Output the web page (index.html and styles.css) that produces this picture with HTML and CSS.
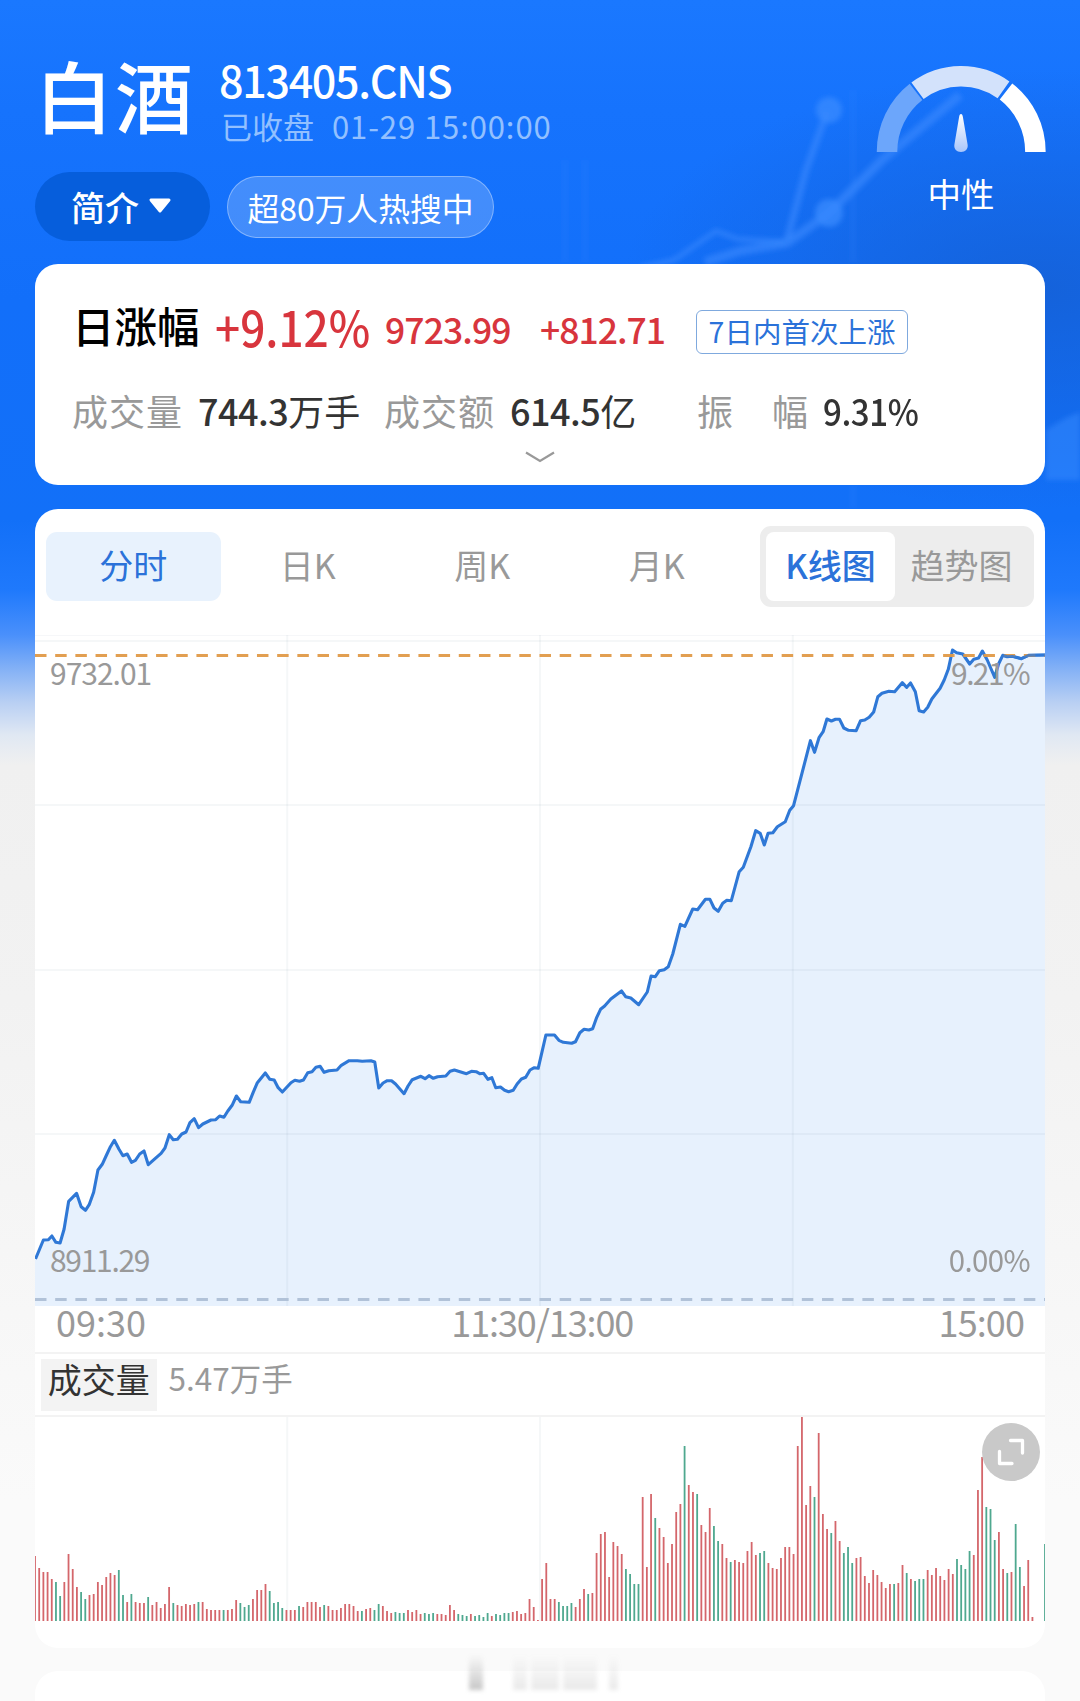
FILE: index.html
```html
<!DOCTYPE html>
<html lang="zh-CN">

<head>
    <meta charset="UTF-8">
    <meta name="viewport" content="width=device-width, initial-scale=1.0">
    <title>白酒 813405.CNS</title>
    <link rel="stylesheet" href="styles.css">
</head>

<body>
    <div class="page">
        <svg class="hero-art" width="1080" height="560" viewBox="0 0 1080 560">
            <defs>
                <filter id="soft" x="-10%" y="-10%" width="120%" height="120%"><feGaussianBlur stdDeviation="2.500"/></filter>
                <radialGradient id="shade">
                    <stop offset="0" stop-color="#155fd3" stop-opacity=".8"/>
                    <stop offset="1" stop-color="#155fd3" stop-opacity="0"/>
                </radialGradient>
            </defs>
            <ellipse cx="1040" cy="290" rx="420" ry="220" fill="url(#shade)"/>
            <g filter="url(#soft)" stroke="#3a8bff" fill="none" stroke-opacity=".6" stroke-linejoin="round">
                <path d="M640 268L674 260L716 231L738 239L785 242" stroke-width="5"/>
                <path d="M705 262L740 251L787 243L829 213L882 160L960 95" stroke-width="9"/>
                <path d="M787 240L806 170L827 112" stroke-width="7"/>
                <circle cx="829" cy="110" r="13" fill="#3a8bff" fill-opacity=".7" stroke="none"/>
                <circle cx="829" cy="213" r="14" fill="#3a8bff" fill-opacity=".7" stroke="none"/>
                <path d="M853 90V262M853 486V508M565 160V262M585 160V262" stroke-width="3" stroke-opacity=".25"/>
                <path d="M1046 430L1066 418L1080 412V480H1046Z" fill="#3a8bff" fill-opacity=".5" stroke="none"/>
            </g>
        </svg>

        <div class="header">
            <div class="header-top">
                <h1>白酒</h1>
                <div class="meta">
                    <div class="code">813405.CNS</div>
                    <div class="status"><span>已收盘</span><span class="date">01-29 15:00:00</span></div>
                </div>
            </div>
            <div class="pills">
                <div class="pill pill-dark">简介
                    <svg width="24" height="16" viewBox="0 0 24 16"><path d="M3 2H21L12 13Z" fill="#fff" stroke="#fff" stroke-width="3" stroke-linejoin="round"/></svg>
                </div>
                <div class="pill pill-light">超80万人热搜中</div>
            </div>
            <div class="gauge">
                <svg width="172" height="90" viewBox="0 0 172 90">
                    <defs>
                        <linearGradient id="needle" x1="0" y1="0" x2="0" y2="1">
                            <stop offset="0" stop-color="#fff"/>
                            <stop offset="1" stop-color="#a9c6fb"/>
                        </linearGradient>
                    </defs>
                    <g fill="none" stroke-width="20.5">
                        <path d="M12 87A74.2 75.5 0 0 1 41 26.9" stroke="#6ca6fb"/>
                        <path d="M42.5 25.8A74.2 75.5 0 0 1 128.5 24.8" stroke="#d3e2fb"/>
                        <path d="M131 26.5A74.2 75.5 0 0 1 160.4 87" stroke="#fff"/>
                    </g>
                    <path d="M86 49C87 49 87.600 50 87.900 52L92.600 79.500C93.400 84 90.300 87 86 87S78.600 84 79.400 79.500L84.100 52C84.400 50 85 49 86 49Z" fill="url(#needle)"/>
                </svg>
                <div class="gauge-label">中性</div>
            </div>
        </div>

        <div class="card summary">
            <div class="change">
                <span class="change-label">日涨幅</span>
                <span class="change-pct">+9.12%</span>
                <span class="change-price">9723.99</span>
                <span class="change-diff">+812.71</span>
                <span class="tag">7日内首次上涨</span>
            </div>
            <div class="stats">
                <div class="stat"><span class="stat-name">成交量</span><span class="stat-value"><b>744.3</b>万手</span></div>
                <div class="stat"><span class="stat-name">成交额</span><span class="stat-value"><b>614.5</b>亿</span></div>
                <div class="stat"><span class="stat-name spread"><i>振</i><i>幅</i></span><span class="stat-value rate"><b>9.31%</b></span></div>
            </div>
            <svg class="chevron" width="32" height="14" viewBox="0 0 32 14"><path d="M2 2.500L16 11L30 2.500" fill="none" stroke="#999" stroke-width="2.200"/></svg>
        </div>

        <div class="card chart-card">
            <div class="tabs">
                <div class="tab active">分时</div>
                <div class="tab">日K</div>
                <div class="tab">周K</div>
                <div class="tab">月K</div>
                <div class="toggle">
                    <div class="toggle-item on">K线图</div>
                    <div class="toggle-item">趋势图</div>
                </div>
            </div>

            <div class="price-chart">
                <svg id="priceChart" width="1010" height="671" viewBox="0 0 1011 671" preserveAspectRatio="none"></svg>
                <span class="label top-left">9732.01</span>
                <span class="label top-right">9.21%</span>
                <span class="label bottom-left">8911.29</span>
                <span class="label bottom-right">0.00%</span>
            </div>
            <div class="time-axis">
                <span>09:30</span>
                <span class="midday">11:30/13:00</span>
                <span class="close">15:00</span>
            </div>

            <div class="volume-head">
                <span class="volume-name">成交量</span>
                <span class="volume-value">5.47万手</span>
            </div>
            <div class="volume-chart">
                <svg id="volumeChart" width="1010" height="204" viewBox="0 0 1011 204" preserveAspectRatio="none"></svg>
                <div class="expand">
                    <svg width="30" height="30" viewBox="0 0 30 30"><path d="M14.500 3.500H26.500V16M3.500 14.500V26.500H16" fill="none" stroke="#fff" stroke-width="3.300" stroke-linecap="round" stroke-linejoin="round"/></svg>
                </div>
            </div>
        </div>

        <div class="card next-card">
            <div class="ghost">
                <i class="g1"></i><i class="g2"></i><i class="g3"></i><i class="g4"></i><i class="g5"></i>
            </div>
        </div>
    </div>

    <script src="chart.js"></script>
</body>

</html>
```

FILE: styles.css
```css
:root {
    --blue: #2b72d9;
    --red: #d8353d;
    --grey: #999;
    --line: #f3f3f3;
}

* {
    box-sizing: border-box;
}

body {
    margin: 0;
    font-family: "Noto Sans CJK SC", sans-serif;
    background: #fafafa;
}

.page {
    position: relative;
    height: 1701px;
    padding: 54px 35px 0;
    overflow: hidden;
    background: linear-gradient(#1a78ff 0, #1673fd 110px, #126ffa 300px, #1270f8 520px, #1f79fc 590px, #4a90fb 635px, #82b0f6 668px, #b8cff3 702px, #e0e8f3 735px, #f0f0f0 765px, #f2f2f2 1000px, #fafafa 1500px);
}

.hero-art {
    position: absolute;
    left: 0;
    top: 0;
}

/* header */
.header {
    position: relative;
    height: 209.5px;
    color: #fff;
}

.header-top {
    display: flex;
    height: 90px;
}

h1 {
    margin: 0;
    width: 184px;
    font-size: 78px;
    font-weight: 500;
    line-height: 81px;
    letter-spacing: 2px;
}

.code {
    padding-top: 2px;
    font-size: 43px;
    line-height: 46px;
    font-weight: 500;
    letter-spacing: -1.3px;
}

.status {
    display: flex;
    gap: 18px;
    margin-top: 6px;
    padding-left: 2px;
    font-size: 31px;
    line-height: 36px;
    color: #92c0ff;
}

.date {
    letter-spacing: 0.9px;
}

.pills {
    display: flex;
    align-items: center;
    gap: 17px;
    margin-top: 28px;
}

.pill {
    display: flex;
    align-items: center;
    justify-content: center;
}

.pill-dark {
    width: 175px;
    height: 69px;
    gap: 9px;
    padding-right: 2px;
    border-radius: 35px;
    background: #065edc;
    font-size: 34px;
    font-weight: 500;
    line-height: 62px;
}

.pill-dark svg {
    position: relative;
    top: -1px;
}

.pill-light {
    width: 267px;
    height: 62px;
    border: 1.5px solid rgba(255, 255, 255, 0.35);
    border-radius: 31px;
    background: rgba(255, 255, 255, 0.2);
    font-size: 31.8px;
    line-height: 54px;
    white-space: nowrap;
}

.gauge {
    position: absolute;
    top: 11px;
    right: -2px;
    display: flex;
    flex-direction: column;
    align-items: center;
}

.gauge-label {
    margin-top: 16px;
    font-size: 33.5px;
    line-height: 44px;
}

/* summary card */
.card {
    position: relative;
    border-radius: 23px;
    background: #fff;
}

.summary {
    height: 221.5px;
    padding: 33px 37px 0 37px;
}

.change {
    display: flex;
    align-items: center;
    height: 60px;
    color: var(--red);
    font-weight: 500;
    white-space: nowrap;
}

.change-label {
    width: 143px;
    margin-top: -4px;
    color: #000;
    font-size: 42.5px;
}

.change-pct {
    width: 170px;
    margin-top: -2px;
    font-size: 48.5px;
    transform: scaleX(0.91);
    transform-origin: left;
}

.change-price {
    width: 155px;
    margin-top: 3px;
    font-size: 35.5px;
    letter-spacing: -0.9px;
}

.change-diff {
    width: 156px;
    margin-top: 3px;
    font-size: 35.5px;
    letter-spacing: -1px;
}

.tag {
    width: 212px;
    height: 44px;
    margin-top: 11px;
    border: 1.5px solid #7fa9de;
    border-radius: 6px;
    color: var(--blue);
    font-size: 28.5px;
    font-weight: 400;
    line-height: 40px;
    text-align: center;
}

.stats {
    display: grid;
    grid-template-columns: 312px 313px 1fr;
    margin-top: 28px;
    font-size: 36px;
    line-height: 50px;
    white-space: nowrap;
}

.stat {
    display: flex;
}

.stat-name {
    width: 126px;
    color: var(--grey);
    letter-spacing: 1px;
}

.spread {
    display: flex;
    justify-content: space-between;
    width: 112px;
    margin-right: 14px;
}

.stat i {
    font-style: normal;
}

.stat-value {
    color: #333;
}

.stat-value b {
    font-weight: 500;
    letter-spacing: -0.5px;
}

.rate {
    transform: scaleX(0.92);
    transform-origin: left;
}

.chevron {
    position: absolute;
    left: 489px;
    bottom: 21px;
}

/* chart card */
.chart-card {
    height: 1138.5px;
    margin-top: 24px;
}

.tabs {
    display: flex;
    align-items: center;
    height: 115px;
    margin-bottom: 11px;
    padding: 0 11px;
    color: var(--grey);
    font-size: 34px;
}

.tab {
    width: 174.5px;
    height: 69px;
    border-radius: 11px;
    line-height: 65px;
    text-align: center;
}

.tab.active {
    background: #e8f2fd;
    color: var(--blue);
}

.toggle {
    display: flex;
    width: 274px;
    height: 81px;
    margin-left: auto;
    padding: 6px;
    border-radius: 11px;
    background: #ededed;
}

.toggle-item {
    width: 133px;
    height: 69px;
    border-radius: 8px;
    line-height: 65px;
    text-align: center;
}

.toggle-item.on {
    width: 129px;
    background: #fff;
    color: var(--blue);
    font-weight: 500;
}

.price-chart {
    position: relative;
    height: 671px;
}

.price-chart svg,
.volume-chart svg {
    display: block;
}

.label {
    position: absolute;
    color: var(--grey);
    font-size: 30px;
    line-height: 30px;
    letter-spacing: -1px;
}

.top-left {
    left: 15px;
    top: 22px;
}

.top-right {
    right: 16px;
    top: 22px;
    letter-spacing: -1.6px;
}

.bottom-left {
    left: 15px;
    top: 609px;
    letter-spacing: -1.3px;
}

.bottom-right {
    right: 15px;
    top: 609px;
    letter-spacing: -0.6px;
    transform: scaleX(0.98);
    transform-origin: right;
}

.time-axis {
    display: flex;
    justify-content: space-between;
    height: 48px;
    padding: 0 21px;
    border-bottom: 2px solid var(--line);
    color: var(--grey);
    font-size: 36px;
    line-height: 31px;
}

.midday {
    letter-spacing: -1.1px;
}

.close {
    letter-spacing: -0.9px;
}

.volume-head {
    display: flex;
    height: 63px;
    padding: 5px 6px;
    border-bottom: 2px solid var(--line);
}

.volume-name {
    width: 115.5px;
    height: 52px;
    background: #f3f3f3;
    color: #333;
    font-size: 34px;
    line-height: 40px;
    text-align: center;
}

.volume-value {
    margin-left: 12px;
    color: var(--grey);
    font-size: 31.5px;
    line-height: 37px;
}

.volume-chart {
    position: relative;
}

.expand {
    position: absolute;
    top: 6px;
    right: 5px;
    display: flex;
    align-items: center;
    justify-content: center;
    width: 58px;
    height: 58px;
    border-radius: 50%;
    background: #c9c9c9;
}

/* next card, cut off by the bottom of the screen */
.next-card {
    height: 60px;
    margin-top: 23px;
}

.ghost {
    position: absolute;
    left: 425px;
    top: -16px;
    display: flex;
    gap: 4px;
    height: 35px;
    filter: blur(2px);
}

.ghost i {
    background: linear-gradient(rgba(120, 120, 120, 0), rgba(120, 120, 120, 0.16));
}

.ghost .g1 {
    width: 14px;
    margin: 0 26px 0 9px;
    background: linear-gradient(rgba(120, 120, 120, 0), rgba(120, 120, 120, 0.42));
}

.ghost .g2 {
    width: 14px;
}

.ghost .g3 {
    width: 28px;
}

.ghost .g4 {
    width: 34px;
}

.ghost .g5 {
    width: 9px;
    margin-left: 8px;
}
```

FILE: chart.js
```js
const NS = 'http://www.w3.org/2000/svg';
const WIDTH = 1011;

const price = [
    [0.5, 624], [8.4, 605], [13.4, 604.7], [16.9, 601], [20.9, 607.3], [25.1, 608], [29.1, 594.3], [33.7, 566.3],
    [41.6, 558.3], [46.2, 571.7], [50.5, 575.3], [54.4, 569.3], [58.7, 557.3], [63, 535], [67.3, 529.3], [71.6, 520],
    [75.5, 511.7], [79.4, 505.3], [84.1, 514.3], [88, 520.7], [92.3, 519], [96.6, 527.3], [100.5, 525.3], [104.8, 519],
    [109.1, 516], [113.4, 529.7], [121.6, 522.3], [126.2, 518.3], [130.1, 513], [134.4, 499.7], [138.4, 504.7],
    [142.6, 504.3], [146.9, 499], [151.2, 497], [155.1, 487.7], [159.4, 483.7], [163.7, 492.7], [168, 489],
    [176.2, 485], [180.9, 484.7], [184.8, 481], [189.1, 482.3], [193, 476], [197.3, 470.3], [201.6, 461],
    [205.9, 466.7], [214.4, 467.3], [218.4, 457.3], [222.6, 447.7], [230.5, 438], [235.1, 444.3], [239.4, 445],
    [243.4, 452.7], [247.6, 457], [256.2, 447.7], [260.1, 445.3], [264.8, 446.3], [268.7, 445], [273, 437.7],
    [277.3, 436.7], [281.2, 432.3], [285.5, 431.3], [289.4, 437.3], [294.1, 435.7], [302.3, 435], [306.6, 430.3],
    [314.4, 425.7], [322.6, 425.7], [327.6, 426.3], [336.2, 425.7], [340.1, 427], [344.1, 453], [348.4, 448],
    [352.6, 445.7], [356.9, 445.7], [360.9, 449], [369.4, 458.7], [373.4, 451], [377.6, 444.7], [386.2, 441.3],
    [390.5, 443.7], [394.4, 440.7], [398.7, 443.3], [403, 441.7], [411.2, 441], [415.5, 436.3], [419.8, 435],
    [431.9, 438.7], [436.9, 436.3], [441.6, 436.7], [445.1, 438.7], [449.1, 438.3], [453.4, 444.3], [457.3, 442.7],
    [461.2, 452.7], [465.9, 452], [470.1, 455.3], [474.1, 456.7], [478.7, 455.3], [482.6, 449], [486.9, 444],
    [491.2, 442.3], [495.5, 435], [499.8, 432.7], [503.7, 433.3], [511.4, 400], [520, 400], [524.4, 405.3],
    [528.9, 407.3], [537.2, 408.3], [541, 406.7], [545.4, 397.7], [549.6, 394.3], [554.4, 395], [558.2, 393.7],
    [562.3, 382.3], [566.1, 374.3], [570.2, 371], [576.4, 364], [587.1, 356], [591.2, 361.7], [596.4, 363],
    [604.3, 369.7], [612.9, 357], [616.7, 341], [620.9, 341.7], [625, 335.7], [629.8, 334.7], [633.9, 331.7],
    [638.4, 319], [646, 289.3], [650.5, 291.3], [658.4, 274], [663.2, 274.7], [671.1, 264.3], [675.6, 264.3],
    [679.7, 273], [683.9, 276.3], [688.4, 268.3], [692.5, 265.3], [697, 265.7], [704.9, 236.7], [709, 232.3],
    [716.6, 211.7], [721.4, 195.7], [725.9, 198.3], [730, 210], [733.8, 198.3], [738.6, 197.7], [743.1, 191.7],
    [751, 186.7], [755.5, 175.3], [759.3, 170.7], [776.2, 105.7], [780.3, 117.3], [784.8, 102.7], [788.9, 96.7],
    [792.7, 84], [797.2, 86], [801.3, 84.3], [805.4, 84.3], [809.6, 93], [814.4, 95.3], [822, 95.7], [826.4, 85.7],
    [830.6, 85], [835, 82.3], [839.5, 77], [843.7, 61.7], [847.8, 58.3], [854.7, 56.3], [860.5, 56.7], [868.1, 47.7],
    [872.6, 52.3], [876.4, 48], [881.2, 56.7], [885, 75.7], [889.5, 77], [893.6, 72.3], [897.7, 64], [906, 53.3],
    [910.1, 45], [914.2, 34.3], [918.4, 15], [922.5, 17.7], [928.7, 19], [935.6, 29], [939.7, 24.3], [944.5, 23],
    [948.3, 16], [953.2, 25], [960.7, 42.3], [964.5, 29], [968.7, 20.3], [973.1, 21.7], [978.6, 21.3],
    [987.3, 23.7], [994.5, 20.3], [1011, 20]
];

// one bar per minute, negative = falling minute
const volume = [
    65, 53, 49, 49, 42, -39, -25, 39, 67, 52, 34, -29, -22, 26, 27, 39, 36, 44, 48, 46,
    -51, -26, 19, -27, 19, 18, 18, -24, 16, 19, 13, 17, 34, -18, 16, 15, 17, 16, 17, -19,
    19, 12, 11, 11, 11, -11, 11, 12, 21, -18, -14, -16, 22, 31, 31, 37, -30, -18, -19, -13,
    11, 11, 11, -15, 14, 19, 19, 19, 14, -16, 15, 11, 11, 13, 17, 17, 15, 10, -10, 12,
    13, -11, -17, 15, 10, 8, -9, -8, -8, 11, 9, 11, 7, -8, -7, -8, 7, 7, 6, 16,
    11, -7, -6, -5, 7, -5, -6, -4, -8, 5, -7, -6, -8, -8, 9, 10, 7, 8, 22, 14,
    1, 42, 58, 22, 22, -19, -15, -15, -18, 14, 22, 32, -27, 28, 68, 87, 89, 44, 79, 75,
    67, -52, -47, -37, -37, 124, 54, 127, -103, 93, 84, 58, 77, 109, 117, -175, 136, 129, -127, 96,
    89, 113, -95, -80, 77, 63, -59, 61, 59, 58, 70, 79, 66, -68, -70, 58, 53, 52, 63, 74,
    74, 67, 175, 204, 116, 135, -124, 188, 107, 92, -88, 100, 80, -68, -74, -58, 63, 64, 45, 38,
    51, 46, 39, 33, 37, -37, 38, 56, -48, 42, -40, -42, -42, 51, 46, 53, 45, 41, 52, 47,
    -62, -56, -52, -70, 66, 131, 164, -114, -112, -81, 89, 52, -48, 49, -97, -54, 35, 61, 4, 0,
    0, -77
];

function add(svg, tag, attrs) {
    const el = document.createElementNS(NS, tag);
    for (const key in attrs) {
        el.setAttribute(key, attrs[key]);
    }
    svg.appendChild(el);
}

function line(svg, x1, y1, x2, y2, attrs) {
    add(svg, 'line', Object.assign({ x1, y1, x2, y2, stroke: '#1d3c66', 'stroke-opacity': 0.045, 'stroke-width': 2 }, attrs));
}

function drawPrice() {
    const svg = document.getElementById('priceChart');
    const points = price.map(p => p.join(',')).join(' ');

    add(svg, 'polygon', { points: `0,671 0,624 ${points} 1011,671`, fill: '#e7f1fd' });
    line(svg, 0, 0.5, WIDTH, 0.5, { 'stroke-width': 1 });
    [6, 170, 335, 499].forEach(y => line(svg, 0, y, WIDTH, y));
    [252.5, 505.5, 758.5].forEach(x => line(svg, x, 0, x, 671));
    line(svg, 0, 664.5, WIDTH, 664.5, { stroke: '#b1c2d8', 'stroke-opacity': 1, 'stroke-width': 3, 'stroke-dasharray': '11.5 8.700' });
    add(svg, 'polyline', { points, fill: 'none', stroke: '#2f78d6', 'stroke-width': 3.1, 'stroke-linejoin': 'round' });
    line(svg, 0, 20.5, WIDTH, 20.5, { stroke: '#e09a48', 'stroke-opacity': 0.95, 'stroke-width': 3, 'stroke-dasharray': '11.5 8.700' });
    // the last stretch of the price line sits on top of the dashes
    add(svg, 'polyline', { points: price.slice(-6).map(p => p.join(',')).join(' '), fill: 'none', stroke: '#2f78d6', 'stroke-width': 2.8, 'stroke-opacity': 0.8 });
}

function drawVolume() {
    const svg = document.getElementById('volumeChart');
    [252.5, 505.5].forEach(x => line(svg, x, 0, x, 204));

    const step = WIDTH / (volume.length - 1);
    volume.forEach((v, i) => {
        const h = Math.abs(v);
        add(svg, 'rect', { x: i * step - 0.9, y: 204 - h, width: 1.8, height: h, fill: v < 0 ? '#4fa88f' : '#d4666b' });
    });
}

drawPrice();
drawVolume();
```
